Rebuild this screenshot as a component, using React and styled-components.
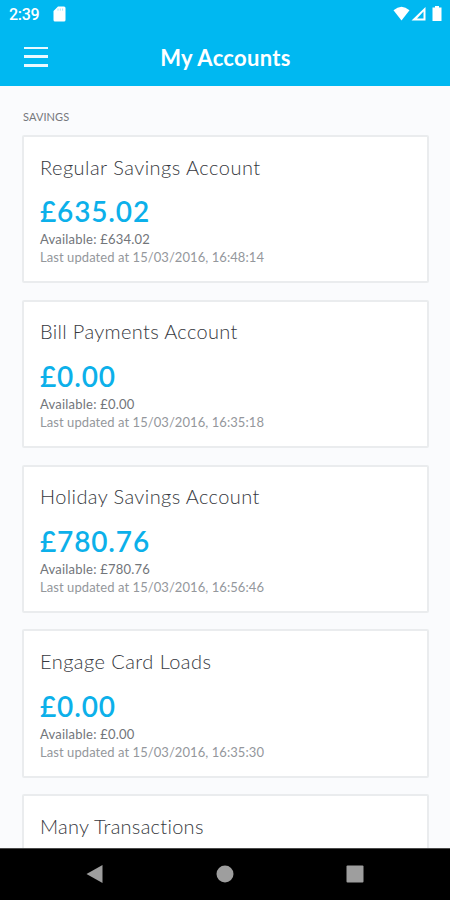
import React from "react";
import styled, { createGlobalStyle } from "styled-components";

const GlobalStyle = createGlobalStyle`
    :root {
        --blue: #00b8f1;
        --balance: #0cb0ea;
        --page: #fafbfd;
        --border: #eaecee;
    }

    * {
        box-sizing: border-box;
    }

    body {
        margin: 0;
        overflow: hidden;
        font-family: Lato, "Open Sans", sans-serif;
    }
`;

const Screen = styled.div`
    display: flex;
    flex-direction: column;
    width: 450px;
    height: 900px;
    overflow: hidden;
    background: var(--page);
`;

const StatusBar = styled.div`
    display: flex;
    align-items: center;
    flex: none;
    height: 29px;
    padding: 0 7px 1px 9px;
    background: var(--blue);
    color: #fff;
`;

const Clock = styled.span`
    width: 44px;
    padding-top: 1px;
    font: 500 16px/28px Roboto, sans-serif;
    letter-spacing: -0.3px;
`;

const StatusIcons = styled.svg`
    margin-left: auto;
`;

const Header = styled.header`
    display: grid;
    grid-template-columns: 72px 1fr 72px;
    align-items: center;
    flex: none;
    height: 57px;
    background: var(--blue);
    color: #fff;
`;

const MenuButton = styled.button`
    display: flex;
    flex-direction: column;
    justify-content: space-between;
    width: 24px;
    height: 20px;
    margin: 0 0 2px 24px;
    padding: 0;
    border: none;
    background: transparent;
    cursor: pointer;
`;

const MenuLine = styled.span`
    height: 2.5px;
    background: #e9f9ff;
`;

const Title = styled.h1`
    margin: 1px 0 0 1px;
    font-size: 22px;
    font-weight: 700;
    line-height: 30px;
    letter-spacing: 0.3px;
    text-align: center;
    white-space: nowrap;
`;

const Content = styled.main`
    flex: 1;
    min-height: 0;
    padding: 22px 21px 0 22px;
    overflow: hidden;
`;

const SectionLabel = styled.h2`
    margin: 0 0 9.8px 1px;
    color: #75777b;
    font-size: 11px;
    font-weight: 400;
    line-height: 17px;
    letter-spacing: 0.1px;
`;

const AccountList = styled.div`
    display: flex;
    flex-direction: column;
    gap: 16.2px;
`;

const Card = styled.section`
    height: 148.7px;
    flex: none;
    padding: 15.8px 16px 0;
    background: #fff;
    border: 2px solid var(--border);
    border-radius: 2px;
    white-space: nowrap;
`;

const AccountName = styled.h3`
    margin: 0 0 11.6px;
    color: #363840;
    font-size: 20px;
    font-weight: 300;
    line-height: 28px;
    letter-spacing: ${({ $spacing }) => $spacing}px;
`;

const Balance = styled.div`
    color: var(--balance);
    font-size: 28px;
    font-weight: 600;
    line-height: 38px;
    letter-spacing: 0.85px;
`;

const Detail = styled.div`
    color: ${({ $muted }) => ($muted ? "#94979c" : "#72757a")};
    font-size: 13px;
    font-weight: 400;
    line-height: 18.3px;
    letter-spacing: ${({ $muted }) => ($muted ? 0.07 : 0.22)}px;
`;

const NavBar = styled.nav`
    display: grid;
    grid-template-columns: 1fr 1fr 1fr;
    align-items: center;
    justify-items: center;
    flex: none;
    height: 52px;
    padding: 0 30px 1px;
    background: #000;
    border-top: 1px solid #4a4a4a;
`;

const accounts = [
    {
        name: "Regular Savings Account",
        spacing: 0.48,
        balance: "£635.02",
        available: "£634.02",
        updated: "15/03/2016, 16:48:14",
    },
    {
        name: "Bill Payments Account",
        spacing: 0.34,
        balance: "£0.00",
        available: "£0.00",
        updated: "15/03/2016, 16:35:18",
    },
    {
        name: "Holiday Savings Account",
        spacing: 0.4,
        balance: "£780.76",
        available: "£780.76",
        updated: "15/03/2016, 16:56:46",
    },
    {
        name: "Engage Card Loads",
        spacing: 0.45,
        balance: "£0.00",
        available: "£0.00",
        updated: "15/03/2016, 16:35:30",
    },
    { name: "Many Transactions", spacing: 0.28 },
];

const AccountCard = ({ account }) => (
    <Card>
        <AccountName $spacing={account.spacing}>{account.name}</AccountName>
        {account.balance && (
            <>
                <Balance>{account.balance}</Balance>
                <Detail>Available: {account.available}</Detail>
                <Detail $muted>Last updated at {account.updated}</Detail>
            </>
        )}
    </Card>
);

const App = () => (
    <>
        <GlobalStyle />
        <Screen>
            <StatusBar>
                <Clock>2:39</Clock>
                <svg width="13" height="16" viewBox="0 0 13 16">
                    <path d="M5 0.5H11a1.5 1.5 0 0 1 1.5 1.5V14a1.5 1.5 0 0 1-1.5 1.5H2A1.5 1.5 0 0 1 .5 14V5Z" fill="#fff" />
                    <path d="M5 2.5v2.2M7.3 2.5v2.2M9.6 2.5v2.2" stroke="#a5e5fb" strokeWidth="1" />
                </svg>
                <StatusIcons width="50" height="16" viewBox="0 0 50 16">
                    <path d="M.5 4.3Q8.5-2.8 16.5 4.3L8.5 14.5Z" fill="#fff" />
                    <path d="M32.5 1V14.5H18.5ZM30.5 5.5L24 12.5H30.5Z" fill="#fff" fillRule="evenodd" />
                    <path d="M42 1.5V0H46V1.5H48.5V15H39.5V1.5Z" fill="#fff" />
                </StatusIcons>
            </StatusBar>
            <Header>
                <MenuButton type="button" aria-label="Menu">
                    <MenuLine />
                    <MenuLine />
                    <MenuLine />
                </MenuButton>
                <Title>My Accounts</Title>
            </Header>
            <Content>
                <SectionLabel>SAVINGS</SectionLabel>
                <AccountList>
                    {accounts.map((account) => (
                        <AccountCard key={account.name} account={account} />
                    ))}
                </AccountList>
            </Content>
            <NavBar>
                <svg width="18" height="20" viewBox="0 0 18 20">
                    <path d="M.5 10L16.5 1V19Z" fill="#9e9e9e" />
                </svg>
                <svg width="18" height="18" viewBox="0 0 18 18">
                    <circle cx="9" cy="9" r="8.5" fill="#9e9e9e" />
                </svg>
                <svg width="18" height="18" viewBox="0 0 18 18">
                    <rect x=".5" y=".5" width="17" height="17" rx="1" fill="#9e9e9e" />
                </svg>
            </NavBar>
        </Screen>
    </>
);

export default App;
